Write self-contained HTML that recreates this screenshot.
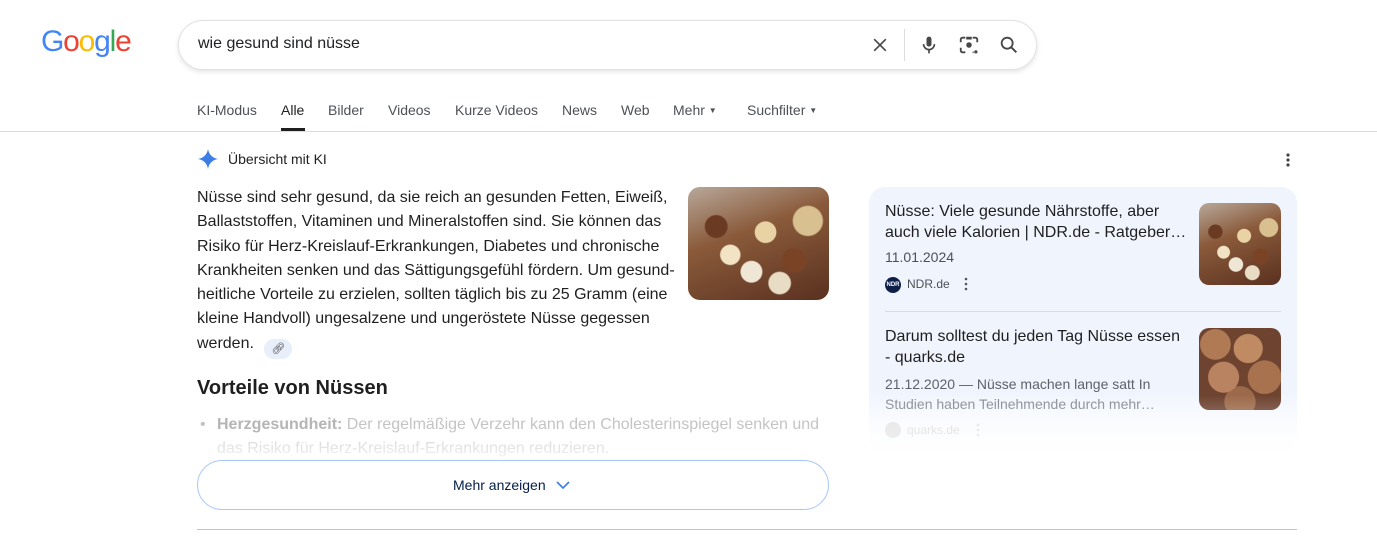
<!DOCTYPE html>
<html><head><meta charset="utf-8"><style>
*{margin:0;padding:0;box-sizing:border-box}
body{width:1377px;height:551px;overflow:hidden;background:#fff;font-family:"Liberation Sans",Arial,sans-serif;color:#1f1f1f;position:relative}
.a{position:absolute}
.logo{left:41px;top:25px;font-size:30px;letter-spacing:-1.2px;font-family:"Liberation Sans",sans-serif}
.sb{left:178px;top:20px;width:859px;height:50px;border:1px solid #dfe1e5;border-radius:25px;box-shadow:0 2px 5px rgba(32,33,36,.12)}
.q{left:198px;top:35px;font-size:16px;color:#202124}
.tab{top:102px;font-size:14px;color:#4d5156}
.nut{border-radius:12px;overflow:hidden;background:
radial-gradient(circle at 30% 60%,#f1e3c4 0 8%,transparent 9%),
radial-gradient(circle at 55% 40%,#e9d3a4 0 10%,transparent 11%),
radial-gradient(circle at 75% 65%,#7a4326 0 9%,transparent 10%),
radial-gradient(circle at 45% 75%,#efe6d6 0 9%,transparent 10%),
radial-gradient(circle at 85% 30%,#d9c090 0 10%,transparent 11%),
radial-gradient(circle at 20% 35%,#6b3a22 0 8%,transparent 9%),
radial-gradient(circle at 65% 85%,#e8dcc4 0 8%,transparent 9%),
linear-gradient(160deg,#b8a89a 0%,#8a5a3a 40%,#5a3120 100%)}
.wal{border-radius:10px;background:
radial-gradient(circle at 20% 20%,#b07a55 0 16%,transparent 17%),
radial-gradient(circle at 60% 25%,#c08a62 0 18%,transparent 19%),
radial-gradient(circle at 30% 60%,#b98260 0 20%,transparent 21%),
radial-gradient(circle at 80% 60%,#a8724f 0 20%,transparent 21%),
radial-gradient(circle at 50% 90%,#9c6a4a 0 18%,transparent 19%),
#6e4330}
.p{left:197px;top:186px;font-size:16px;line-height:24.3px;color:#1f1f1f}
.r{font-size:16px;line-height:20.5px;color:#1f1f1f}
.g{font-size:14px;color:#4d5156}
</style></head><body>
<div class="a logo"><span style="color:#4285f4">G</span><span style="color:#ea4335">o</span><span style="color:#fbbc05">o</span><span style="color:#4285f4">g</span><span style="color:#34a853">l</span><span style="color:#ea4335">e</span></div>
<div class="a sb"></div>
<div class="a q">wie gesund sind nüsse</div>
<svg class="a" style="left:870px;top:35px" width="20" height="20" viewBox="0 0 24 24"><path d="M5 5L19 19M19 5L5 19" stroke="#474747" stroke-width="2"/></svg>
<div class="a" style="left:904px;top:29px;width:1px;height:32px;background:#dadce0"></div>
<svg class="a" style="left:919px;top:34px" width="20" height="22" viewBox="0 0 24 24"><rect x="9" y="2" width="6" height="12" rx="3" fill="#474747"/><path d="M5.5 11a6.5 6.5 0 0013 0M12 17.5V22" stroke="#474747" stroke-width="2" fill="none"/></svg>
<svg class="a" style="left:958px;top:34px" width="22" height="22" viewBox="0 0 24 24"><path d="M3 9V6a2 2 0 012-2h3M16 4h3a2 2 0 012 2v3M3 15v3a2 2 0 002 2h3M16 20h1" stroke="#474747" stroke-width="2" fill="none"/><circle cx="12" cy="12" r="3" fill="#474747"/><circle cx="19.5" cy="19.5" r="1.8" fill="#474747"/><rect x="9" y="3" width="6" height="3" fill="#474747"/></svg>
<svg class="a" style="left:998px;top:34px" width="22" height="22" viewBox="0 0 24 24"><circle cx="10" cy="10" r="6" stroke="#474747" stroke-width="2" fill="none"/><path d="M14.5 14.5L20 20" stroke="#474747" stroke-width="2.2"/></svg>

<div class="a tab" style="left:197px">KI-Modus</div>
<div class="a tab" style="left:281px;color:#1f1f1f">Alle</div>
<div class="a" style="left:281px;top:128px;width:24px;height:3px;background:#1f1f1f"></div>
<div class="a tab" style="left:328px">Bilder</div>
<div class="a tab" style="left:388px">Videos</div>
<div class="a tab" style="left:455px">Kurze Videos</div>
<div class="a tab" style="left:562px">News</div>
<div class="a tab" style="left:621px">Web</div>
<div class="a tab" style="left:673px">Mehr <span style="font-size:8px;vertical-align:2px">▼</span></div>
<div class="a tab" style="left:747px">Suchfilter <span style="font-size:8px;vertical-align:2px">▼</span></div>
<div class="a" style="left:0;top:131px;width:1377px;height:1px;background:#dadce0"></div>

<svg class="a" style="left:197px;top:148px" width="22" height="22" viewBox="0 0 24 24"><path d="M12 1C12.8 7 17 11.2 23 12 17 12.8 12.8 17 12 23 11.2 17 7 12.8 1 12 7 11.2 11.2 7 12 1Z" fill="#3c7de8"/></svg>
<div class="a" style="left:228px;top:151px;font-size:14px;color:#1f1f1f">Übersicht mit KI</div>
<svg class="a" style="left:1281px;top:152px" width="14" height="16" viewBox="0 0 14 16"><circle cx="7" cy="3" r="1.6" fill="#444"/><circle cx="7" cy="8" r="1.6" fill="#444"/><circle cx="7" cy="13" r="1.6" fill="#444"/></svg>

<div class="a p">Nüsse sind sehr gesund, da sie reich an gesunden Fetten, Eiweiß,<br>Ballaststoffen, Vitaminen und Mineralstoffen sind. Sie können das<br>Risiko für Herz-Kreislauf-Erkrankungen, Diabetes und chronische<br>Krankheiten senken und das Sättigungsgefühl fördern. Um gesund-<br>heitliche Vorteile zu erzielen, sollten täglich bis zu 25 Gramm (eine<br>kleine Handvoll) ungesalzene und ungeröstete Nüsse gegessen<br>werden. <span style="display:inline-block;width:28px;height:20px;border-radius:10px;background:#e8eefa;vertical-align:-4px;text-align:center;font-size:11px;line-height:20px;color:#444;margin-left:6px">🔗︎</span></div>
<div class="a nut" style="left:688px;top:187px;width:141px;height:113px"></div>

<div class="a" style="left:197px;top:377px;font-size:20px;font-weight:bold;color:#1f1f1f">Vorteile von Nüssen</div>
<div class="a" style="left:200px;top:413px;font-size:16px;line-height:24px;color:#c4c4c4;width:640px"><span style="position:absolute;left:0">•</span><div style="padding-left:17px"><b style="color:#b5b5b5">Herzgesundheit:</b> Der regelmäßige Verzehr kann den Cholesterinspiegel senken und das Risiko für Herz-Kreislauf-Erkrankungen reduzieren.</div></div>
<div class="a" style="left:190px;top:432px;width:650px;height:30px;background:linear-gradient(rgba(255,255,255,.2),rgba(255,255,255,.85))"></div>
<div class="a" style="left:197px;top:460px;width:632px;height:50px;border:1px solid #a8c7fa;border-radius:25px;background:#fff"></div>
<div class="a" style="left:453px;top:477px;font-size:14px;color:#041e49">Mehr anzeigen</div>
<svg class="a" style="left:555px;top:478px" width="16" height="14" viewBox="0 0 16 14"><path d="M2 4l6 6 6-6" stroke="#3c7de8" stroke-width="1.6" fill="none"/></svg>
<div class="a" style="left:197px;top:529px;width:1100px;height:1px;background:#a8c7fa"></div>

<div class="a" style="left:869px;top:187px;width:428px;height:265px;border-radius:16px;background:linear-gradient(#eff4fd 0,#eff4fd 200px,#fff 265px)"></div>
<div class="a r" style="left:885px;top:202px">Nüsse: Viele gesunde Nährstoffe, aber<br>auch viele Kalorien | NDR.de - Ratgeber…</div>
<div class="a g" style="left:885px;top:249px">11.01.2024</div>
<div class="a" style="left:885px;top:277px;width:16px;height:16px;border-radius:8px;background:#0e1f4a;color:#fff;font-size:6px;line-height:16px;text-align:center;font-weight:bold">NDR</div>
<div class="a" style="left:907px;top:277px;font-size:12px;color:#4d5156">NDR.de</div>
<svg class="a" style="left:962px;top:277px" width="8" height="14"><circle cx="4" cy="2" r="1.3" fill="#555"/><circle cx="4" cy="7" r="1.3" fill="#555"/><circle cx="4" cy="12" r="1.3" fill="#555"/></svg>
<div class="a nut" style="left:1199px;top:203px;width:82px;height:82px;border-radius:10px"></div>
<div class="a" style="left:885px;top:311px;width:396px;height:1px;background:#cfdcf2"></div>
<div class="a r" style="left:885px;top:327px">Darum solltest du jeden Tag Nüsse essen<br>- quarks.de</div>
<div class="a g" style="left:885px;top:374px;line-height:20px;color:#5f6368">21.12.2020 — Nüsse machen lange satt In<br><span style="color:#878b90">Studien haben Teilnehmende durch mehr…</span></div>
<div class="a wal" style="left:1199px;top:328px;width:82px;height:82px"></div>
<div class="a" style="left:885px;top:422px;width:16px;height:16px;border-radius:8px;background:#e0e0e0"></div>
<div class="a" style="left:907px;top:423px;font-size:12px;color:#d6d6d6">quarks.de</div>
<svg class="a" style="left:974px;top:423px" width="8" height="14"><circle cx="4" cy="2" r="1.3" fill="#ddd"/><circle cx="4" cy="7" r="1.3" fill="#ddd"/><circle cx="4" cy="12" r="1.3" fill="#ddd"/></svg>
<div class="a" style="left:869px;top:395px;width:428px;height:60px;background:linear-gradient(rgba(255,255,255,0),rgba(255,255,255,.6))"></div>
</body></html>
